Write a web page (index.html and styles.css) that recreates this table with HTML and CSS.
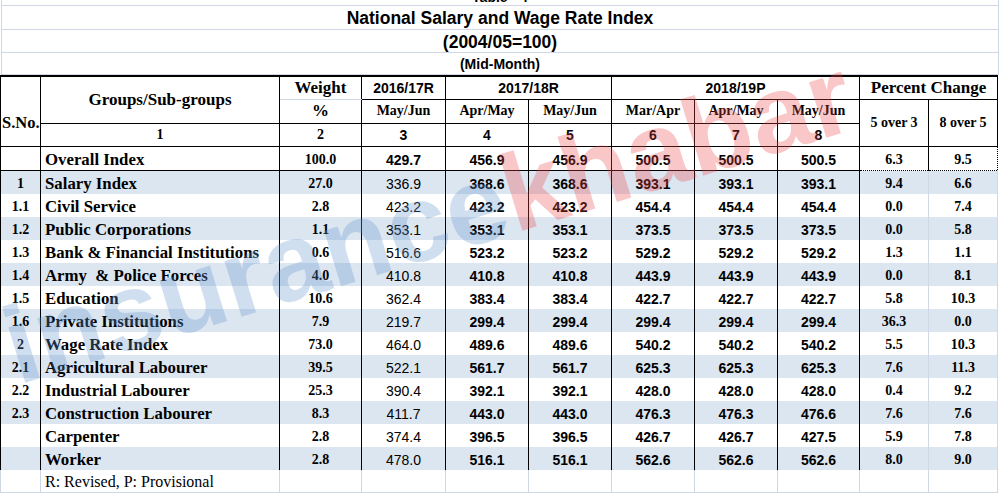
FILE: index.html
```html
<!DOCTYPE html>
<html>
<head>
<meta charset="utf-8">
<link rel="stylesheet" href="styles.css">
</head>
<body>
<div class="sheet">
  <div class="titles">
    <div class="trow t0"><span class="tabno">Table - 4</span></div>
    <div class="trow t1">National Salary and Wage Rate Index</div>
    <div class="trow t2">(2004/05=100)</div>
    <div class="trow t3">(Mid-Month)</div>
  </div>
  <table class="grid">
    <colgroup>
      <col class="c-sn"><col class="c-grp"><col class="c-wt"><col class="c-v84"><col class="c-v83"><col class="c-v83"><col class="c-v83"><col class="c-v83"><col class="c-v82"><col class="c-pc"><col class="c-pc">
    </colgroup>
    <thead>
      <tr class="h1">
        <th rowspan="3" class="sno">S.No.</th>
        <th rowspan="2" class="tnr17">Groups/Sub-groups</th>
        <th class="tnr17 wt-top">Weight</th>
        <th class="ar14">2016/17R</th>
        <th colspan="2" class="ar14">2017/18R</th>
        <th colspan="3" class="ar14">2018/19P</th>
        <th colspan="2" class="tnr17">Percent Change</th>
      </tr>
      <tr class="h2">
        <th class="tnr17 wt-bot">%</th>
        <th class="tnr14">May/Jun</th>
        <th class="tnr14">Apr/May</th>
        <th class="tnr14">May/Jun</th>
        <th class="tnr14">Mar/Apr</th>
        <th class="tnr14">Apr/May</th>
        <th class="tnr14">May/Jun</th>
        <th rowspan="2" class="tnr14">5 over 3</th>
        <th rowspan="2" class="tnr14">8 over 5</th>
      </tr>
      <tr class="h3">
        <th class="tnr14">1</th>
        <th class="tnr14">2</th>
        <th class="ar14">3</th>
        <th class="ar14">4</th>
        <th class="ar14">5</th>
        <th class="ar14">6</th>
        <th class="ar14">7</th>
        <th class="ar14">8</th>
      </tr>
    </thead>
    <tbody>
      <tr class="overall">
        <td class="sn"></td><td class="name">Overall Index</td><td class="wt">100.0</td>
        <td class="num">429.7</td><td class="num">456.9</td><td class="num">456.9</td><td class="num">500.5</td><td class="num">500.5</td><td class="num">500.5</td>
        <td class="pc dot">6.3</td><td class="pc dot">9.5</td>
      </tr>
      <tr class="row b"><td class="sn">1</td><td class="name">Salary Index</td><td class="wt">27.0</td><td class="num reg">336.9</td><td class="num">368.6</td><td class="num">368.6</td><td class="num">393.1</td><td class="num">393.1</td><td class="num">393.1</td><td class="pc">9.4</td><td class="pc">6.6</td></tr>
      <tr class="row"><td class="sn">1.1</td><td class="name">Civil Service</td><td class="wt">2.8</td><td class="num reg">423.2</td><td class="num">423.2</td><td class="num">423.2</td><td class="num">454.4</td><td class="num">454.4</td><td class="num">454.4</td><td class="pc">0.0</td><td class="pc">7.4</td></tr>
      <tr class="row b"><td class="sn">1.2</td><td class="name">Public Corporations</td><td class="wt">1.1</td><td class="num reg">353.1</td><td class="num">353.1</td><td class="num">353.1</td><td class="num">373.5</td><td class="num">373.5</td><td class="num">373.5</td><td class="pc">0.0</td><td class="pc">5.8</td></tr>
      <tr class="row"><td class="sn">1.3</td><td class="name">Bank &amp; Financial Institutions</td><td class="wt">0.6</td><td class="num reg">516.6</td><td class="num">523.2</td><td class="num">523.2</td><td class="num">529.2</td><td class="num">529.2</td><td class="num">529.2</td><td class="pc">1.3</td><td class="pc">1.1</td></tr>
      <tr class="row b"><td class="sn">1.4</td><td class="name">Army&nbsp; &amp; Police Forces</td><td class="wt">4.0</td><td class="num reg">410.8</td><td class="num">410.8</td><td class="num">410.8</td><td class="num">443.9</td><td class="num">443.9</td><td class="num">443.9</td><td class="pc">0.0</td><td class="pc">8.1</td></tr>
      <tr class="row"><td class="sn">1.5</td><td class="name">Education</td><td class="wt">10.6</td><td class="num reg">362.4</td><td class="num">383.4</td><td class="num">383.4</td><td class="num">422.7</td><td class="num">422.7</td><td class="num">422.7</td><td class="pc">5.8</td><td class="pc">10.3</td></tr>
      <tr class="row b"><td class="sn">1.6</td><td class="name">Private Institutions</td><td class="wt">7.9</td><td class="num reg">219.7</td><td class="num">299.4</td><td class="num">299.4</td><td class="num">299.4</td><td class="num">299.4</td><td class="num">299.4</td><td class="pc">36.3</td><td class="pc">0.0</td></tr>
      <tr class="row"><td class="sn">2</td><td class="name">Wage Rate Index</td><td class="wt">73.0</td><td class="num reg">464.0</td><td class="num">489.6</td><td class="num">489.6</td><td class="num">540.2</td><td class="num">540.2</td><td class="num">540.2</td><td class="pc">5.5</td><td class="pc">10.3</td></tr>
      <tr class="row b"><td class="sn">2.1</td><td class="name">Agricultural Labourer</td><td class="wt">39.5</td><td class="num reg">522.1</td><td class="num">561.7</td><td class="num">561.7</td><td class="num">625.3</td><td class="num">625.3</td><td class="num">625.3</td><td class="pc">7.6</td><td class="pc">11.3</td></tr>
      <tr class="row"><td class="sn">2.2</td><td class="name">Industrial Labourer</td><td class="wt">25.3</td><td class="num reg">390.4</td><td class="num">392.1</td><td class="num">392.1</td><td class="num">428.0</td><td class="num">428.0</td><td class="num">428.0</td><td class="pc">0.4</td><td class="pc">9.2</td></tr>
      <tr class="row b"><td class="sn">2.3</td><td class="name">Construction Labourer</td><td class="wt">8.3</td><td class="num reg">411.7</td><td class="num">443.0</td><td class="num">443.0</td><td class="num">476.3</td><td class="num">476.3</td><td class="num">476.6</td><td class="pc">7.6</td><td class="pc">7.6</td></tr>
      <tr class="row"><td class="sn"></td><td class="name">Carpenter</td><td class="wt">2.8</td><td class="num reg">374.4</td><td class="num">396.5</td><td class="num">396.5</td><td class="num">426.7</td><td class="num">426.7</td><td class="num">427.5</td><td class="pc">5.9</td><td class="pc">7.8</td></tr>
      <tr class="row b"><td class="sn"></td><td class="name">Worker</td><td class="wt">2.8</td><td class="num reg">478.0</td><td class="num">516.1</td><td class="num">516.1</td><td class="num">562.6</td><td class="num">562.6</td><td class="num">562.6</td><td class="pc">8.0</td><td class="pc">9.0</td></tr>
      <tr class="foot"><td></td><td class="note">R: Revised, P: Provisional</td><td></td><td></td><td></td><td></td><td></td><td></td><td></td><td></td><td></td></tr>
    </tbody>
  </table>
  <div class="watermark">
    <span class="wm-blue">insurance</span><span class="wm-red">khabar</span>
  </div>
</div>
</body>
</html>
```

FILE: styles.css
```css
html, body {
  margin: 0;
  padding: 0;
  background: #ffffff;
}

.sheet {
  position: relative;
  width: 1000px;
  height: 495px;
  overflow: hidden;
  color: #000;
}

.titles {
  width: 996px;
  margin-left: 1px;
  border-left: 1px solid #d0d7e5;
  border-right: 1px solid #d0d7e5;
}

.trow {
  border-bottom: 1px solid #d0d7e5;
  text-align: center;
  font-family: "Liberation Sans", Arial, sans-serif;
  font-weight: bold;
  overflow: hidden;
  display: flex;
  align-items: flex-end;
  justify-content: center;
  box-sizing: border-box;
}

.t0 { height: 6px; font-size: 14px; line-height: 14px; }
.t0 .tabno { display: block; margin-bottom: 1px; }
.t1 { height: 24px; font-size: 17.5px; line-height: 21px; }
.t2 { height: 23px; font-size: 17.5px; line-height: 20px; }
.t3 { height: 22px; font-size: 14px; line-height: 18px; padding-bottom: 1px; }

.grid {
  border-collapse: collapse;
  table-layout: fixed;
  width: 998px;
  border-top: 2px solid #000;
}

.c-sn { width: 40px; }
.c-grp { width: 239px; }
.c-wt { width: 82px; }
.c-v84 { width: 84px; }
.c-v83 { width: 83px; }
.c-v82 { width: 82px; }
.c-pc { width: 69px; }

th, td {
  padding: 0;
  white-space: nowrap;
  overflow: hidden;
}

thead th {
  border: 1px solid #000;
  text-align: center;
  vertical-align: middle;
  font-weight: bold;
}

.tnr17 { font-family: "Liberation Serif", "Times New Roman", serif; font-size: 17px; }
.tnr14 { font-family: "Liberation Serif", "Times New Roman", serif; font-size: 14px; }
.ar14 { font-family: "Liberation Sans", Arial, sans-serif; font-size: 14px; }

th.sno {
  font-family: "Liberation Serif", "Times New Roman", serif;
  font-size: 16.5px;
  text-align: left;
  padding-top: 24px;
  padding-left: 1px;
}

th.wt-top { border-bottom: 1px solid #d0d7e5; }
th.wt-bot { border-top: 1px solid #d0d7e5; }

tr.h1 { height: 23px; }
tr.h2 { height: 24px; }
tr.h3 { height: 23px; }
tr.overall { height: 24px; }
tr.row { height: 23px; }
tr.foot { height: 23px; }

tbody td {
  border-left: 1px solid #000;
  border-right: 1px solid #000;
  text-align: center;
  vertical-align: middle;
  padding-top: 3px;
}

tr.overall td {
  border-top: 1px solid #000;
  border-bottom: 1px solid #000;
}

tr.b td { background: #dce6f1; }

td.sn {
  font-family: "Liberation Serif", "Times New Roman", serif;
  font-weight: bold;
  font-size: 14px;
}

td.name {
  font-family: "Liberation Serif", "Times New Roman", serif;
  font-weight: bold;
  font-size: 16.8px;
  text-align: left;
  padding-left: 4px;
}

td.wt {
  font-family: "Liberation Serif", "Times New Roman", serif;
  font-weight: bold;
  font-size: 14px;
}

td.num {
  font-family: "Liberation Sans", Arial, sans-serif;
  font-weight: bold;
  font-size: 14px;
}

td.num.reg { font-weight: normal; }

td.pc {
  font-family: "Liberation Serif", "Times New Roman", serif;
  font-weight: bold;
  font-size: 14px;
  border-right: 1px solid #d0d7e5;
}

tr.overall td.pc.dot {
  border-top: 1px solid #000;
  border-bottom: 1px dotted #000;
  border-right: 1px dotted #000;
}

tr.foot td {
  border: 1px solid #d0d7e5;
  border-top: none;
}

td.note {
  font-family: "Liberation Serif", "Times New Roman", serif;
  font-size: 16px;
  text-align: left;
  padding-left: 4px;
}

.watermark {
  position: absolute;
  left: 18px;
  top: 292px;
  transform-origin: 0 93px;
  transform: rotate(-17deg);
  font-family: "Liberation Sans", Arial, sans-serif;
  font-weight: bold;
  font-size: 110px;
  line-height: 110px;
  white-space: nowrap;
  pointer-events: none;
}

.wm-blue { color: rgba(100, 150, 205, 0.3); }
.wm-red { color: rgba(235, 70, 70, 0.3); }
```
